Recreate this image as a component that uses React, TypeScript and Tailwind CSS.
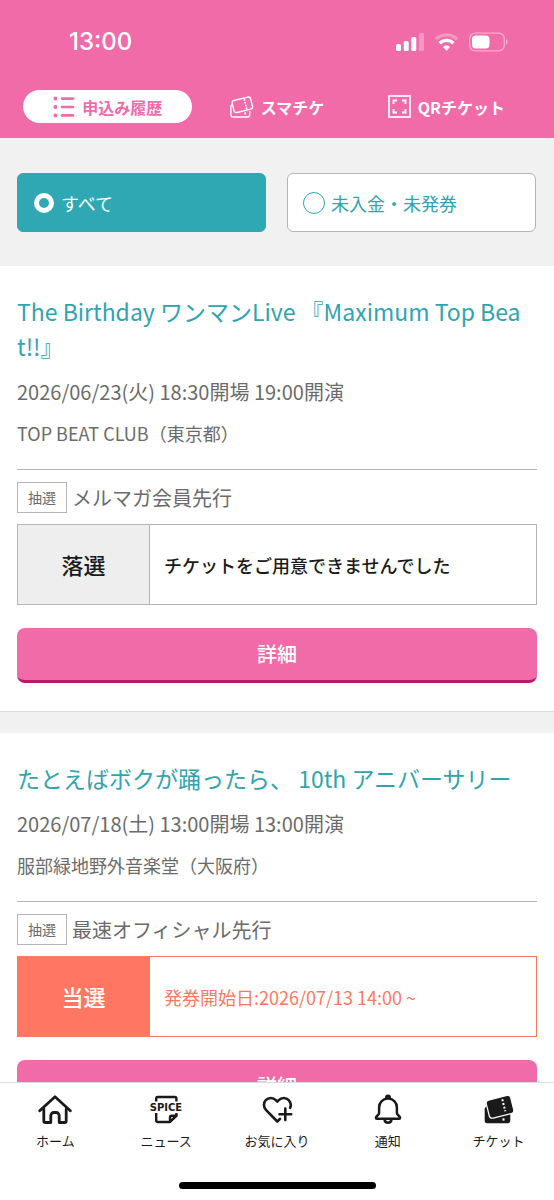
import React, { useState } from 'react';

interface Application {
  id: string;
  title: string;
  date: string;
  venue: string;
  saleType: string;
  saleName: string;
  status: 'won' | 'lost';
  statusLabel: string;
  message: string;
}

const applications: Application[] = [
  {
    id: 'birthday',
    title: 'The Birthday ワンマンLive 『Maximum Top Beat!!』',
    date: '2026/06/23(火) 18:30開場 19:00開演',
    venue: 'TOP BEAT CLUB（東京都）',
    saleType: '抽選',
    saleName: 'メルマガ会員先行',
    status: 'lost',
    statusLabel: '落選',
    message: 'チケットをご用意できませんでした',
  },
  {
    id: 'tatoeba',
    title: 'たとえばボクが踊ったら、 10th アニバーサリー',
    date: '2026/07/18(土) 13:00開場 13:00開演',
    venue: '服部緑地野外音楽堂（大阪府）',
    saleType: '抽選',
    saleName: '最速オフィシャル先行',
    status: 'won',
    statusLabel: '当選',
    message: '発券開始日:2026/07/13 14:00 ~',
  },
];

const StatusBar = () => (
  <div className="flex h-[82px] items-center justify-between pt-0.5 pr-[46px] pl-[69px] text-white">
    <span className="font-['Inter',sans-serif] text-2xl font-medium">13:00</span>
    <div className="flex items-center gap-[11px]">
      <svg width="28" height="18" viewBox="0 0 28 18" fill="currentColor">
        <rect x="0" y="11" width="5" height="7" rx="1.5" />
        <rect x="7.7" y="8" width="5" height="10" rx="1.5" />
        <rect x="15.3" y="4" width="5" height="14" rx="1.5" />
        <rect x="23" y="0" width="5" height="18" rx="1.5" opacity="0.3" />
      </svg>
      <svg width="23" height="18" viewBox="0 0 23 18" fill="none" stroke="currentColor" strokeWidth="3.4">
        <path d="M1 6.2a15 15 0 0 1 21 0" opacity="0.3" />
        <path d="M4.6 10.2a9.8 9.8 0 0 1 13.8 0" />
        <path d="M8 14a5 5 0 0 1 7 0L11.5 17.800z" fill="currentColor" stroke="none" />
      </svg>
      <svg width="39" height="20" viewBox="0 0 39 20">
        <rect x="0.7" y="1.2" width="34.6" height="17.6" rx="5.5" fill="none" stroke="currentColor" strokeWidth="1.3" opacity="0.45" />
        <rect x="3" y="3.5" width="17.5" height="13" rx="3.8" fill="currentColor" />
        <path d="M37 7.3c2 .9 2 4.5 0 5.4z" fill="currentColor" opacity="0.5" />
      </svg>
    </div>
  </div>
);

const ListIcon = () => (
  <svg width="22" height="22" viewBox="0 0 22 22" fill="none" stroke="currentColor" strokeWidth="2.6" strokeLinecap="round">
    <path d="M9 2.6h11M9 11h11M9 19.4h11" />
    <path d="M2.4 2.6h.01M2.4 11h.01M2.4 19.4h.01" strokeWidth="4" />
  </svg>
);

const TicketsIcon = () => (
  <svg width="24" height="22" viewBox="0 0 24 22" fill="none" stroke="currentColor" strokeWidth="1.4" strokeLinecap="round" strokeLinejoin="round">
    <rect x="2.8" y="2.6" width="19" height="12.4" rx="2.4" transform="rotate(-14 12.3 8.8)" />
    <path d="M1.9 8.8c-.7.5-1 1-1 1.8v8.2a2.2 2.2 0 0 0 2.2 2.2h14.4a2.2 2.2 0 0 0 2.2-2.2v-3.2" />
    <path d="M14.4 3.8l2.3 8.8" strokeWidth="1.9" strokeDasharray="0.1 2.8" />
    <path d="M15.2 17v.8" strokeWidth="1.8" />
  </svg>
);

const QrIcon = () => (
  <svg width="23" height="23" viewBox="0 0 23 23" fill="none" stroke="currentColor" strokeWidth="1.7">
    <rect x="1" y="1" width="21" height="21" />
    <path d="M5.5 9V5.5H9M14 5.5h3.5V9M17.5 14v3.5H14M9 17.5H5.5V14" strokeWidth="1.9" />
  </svg>
);

const HomeIcon = () => (
  <svg width="34" height="32" viewBox="0 0 34 32" fill="none" stroke="currentColor" strokeWidth="2.8" strokeLinecap="round" strokeLinejoin="round">
    <path d="M1.7 16.8 17 2.8l15.3 14" />
    <path d="M5.8 15v12a1.500 1.500 0 0 0 1.500 1.500h5.500v-7a3 3 0 0 1 3-3h2.400a3 3 0 0 1 3 3v7h5.500a1.500 1.500 0 0 0 1.500-1.500V15" />
  </svg>
);

const NewsIcon = () => (
  <svg width="36" height="32" viewBox="0 0 36 32" fill="none" stroke="currentColor" strokeWidth="2.4" strokeLinejoin="round">
    <path d="M8.2 7.5V4.500a1.500 1.500 0 0 1 1.500-1.500h17.200a1.500 1.500 0 0 1 1.500 1.500v3" />
    <path d="M8.2 19v7.500A1.500 1.500 0 0 0 9.700 28h12l6.700-6.500V19" />
    <path d="M22 28v-4.700a1.500 1.500 0 0 1 1.500-1.500h4.900z" />
    <text x="18" y="17" textAnchor="middle" fill="currentColor" stroke="none" className="font-['DejaVu_Sans',sans-serif] text-[10px] font-bold">
      SPICE
    </text>
  </svg>
);

const FavoriteIcon = () => (
  <svg width="32" height="32" viewBox="0 0 32 32" fill="none" stroke="currentColor" strokeWidth="2.6" strokeLinecap="round" strokeLinejoin="round">
    <path d="M19 24.800 16.300 27.500 4.900 15.800C2.300 13.200 2.300 8.900 4.800 6.200c2.800-2.900 7.300-2.800 10 0l1.500 1.500 1.500-1.500c2.700-2.800 7.200-2.900 9.900 0 2 2.200 2.600 5 1.500 7.600" />
    <path d="M24.300 14.500v11.500M18.500 20.300h11.700" />
  </svg>
);

const BellIcon = () => (
  <svg width="28" height="32" viewBox="0 0 28 32" fill="none" stroke="currentColor" strokeWidth="2.5" strokeLinecap="round" strokeLinejoin="round">
    <path d="M14 4.600c-5 0-8.900 3.900-8.900 8.900v5.600c0 2.200-3.200 2.700-3.200 4.800 0 .600.400.900 1 .900h22.200c.600 0 1-.300 1-.900 0-2.100-3.200-2.600-3.200-4.800v-5.600c0-5-3.900-8.900-8.900-8.900z" />
    <path d="M12.200 3.300c.2-2 3.400-2 3.600 0z" fill="currentColor" />
    <path d="M10.500 25.500c.5 4.300 6.500 4.300 7 0" />
  </svg>
);

const TicketSolidIcon = () => (
  <svg width="32" height="32" viewBox="0 0 32 32" fill="currentColor">
    <path d="M3.500 12.300 1.700 14.300v12.500a2.500 2.500 0 0 0 2.500 2.500h20.600a2.500 2.500 0 0 0 2.500-2.500V18z" />
    <rect x="4.4" y="3.500" width="25.200" height="18.600" rx="3.200" transform="rotate(-14 17 12.800)" stroke="white" strokeWidth="1.200" />
    <path d="M19.300 5.300l3 12" fill="none" stroke="white" strokeWidth="2" strokeDasharray="2 1.800" />
    <path d="M20.500 24.300v2.300" fill="none" stroke="white" strokeWidth="2" />
  </svg>
);

const tabs = [
  { id: 'history', label: '申込み履歴', icon: <ListIcon /> },
  { id: 'smart', label: 'スマチケ', icon: <TicketsIcon /> },
  { id: 'qr', label: 'QRチケット', icon: <QrIcon /> },
];

const filters = [
  { id: 'all', label: 'すべて' },
  { id: 'pending', label: '未入金・未発券' },
];

const navItems = [
  { label: 'ホーム', icon: <HomeIcon /> },
  { label: 'ニュース', icon: <NewsIcon /> },
  { label: 'お気に入り', icon: <FavoriteIcon /> },
  { label: '通知', icon: <BellIcon /> },
  { label: 'チケット', icon: <TicketSolidIcon /> },
];

const ApplicationCard: React.FC<{ item: Application }> = ({ item }) => {
  const won = item.status === 'won';

  return (
    <article className="border-b border-[#dcdcdc] bg-white px-[17px] py-7">
      <h2 className="text-[23px] leading-[35px] font-normal break-all text-[#2fa4b0]">{item.title}</h2>
      <p className="mt-[13px] text-xl leading-[30px] text-[#6b6b6b]">{item.date}</p>
      <p className="mt-[13px] text-lg leading-[26px] text-[#6b6b6b]">{item.venue}</p>

      <div className="mt-[23px] flex items-center gap-[5px] border-t border-[#b5b5b5] pt-3">
        <span className="border border-[#b5b5b5] px-2.5 text-sm leading-[29px] text-[#6b6b6b]">{item.saleType}</span>
        <span className="text-xl leading-[30px] text-[#6b6b6b]">{item.saleName}</span>
      </div>

      <div className={`mt-[11px] flex h-[81px] border ${won ? 'border-[#ff7762]' : 'border-[#b5b5b5]'}`}>
        <div
          className={`flex w-[132px] shrink-0 items-center justify-center border-r text-[22px] font-medium ${
            won ? 'border-[#ff7762] bg-[#ff7762] text-white' : 'border-[#b5b5b5] bg-[#eeeeee] text-[#1a1a1a]'
          }`}
        >
          {item.statusLabel}
        </div>
        <p
          className={`flex flex-1 items-center px-[14px] text-lg ${
            won ? 'font-normal text-[#ff7762]' : 'font-medium text-[#1a1a1a]'
          }`}
        >
          {item.message}
        </p>
      </div>

      <button
        type="button"
        className="mt-[23px] h-[55px] w-full rounded-lg border-b-3 border-[#bf1768] bg-[#f16ba9] text-xl font-medium text-white"
      >
        詳細
      </button>
    </article>
  );
};

export default function App() {
  const [activeTab, setActiveTab] = useState('history');
  const [filter, setFilter] = useState('all');

  return (
    <div className="flex h-dvh flex-col bg-[#f1f1f1] font-['Noto_Sans_CJK_JP',sans-serif]">
      <header className="shrink-0 bg-[#f16ba9] pb-[15px]">
        <StatusBar />
        <nav className="flex px-[23px] pt-2">
          {tabs.map((tab) => (
            <button
              key={tab.id}
              type="button"
              onClick={() => setActiveTab(tab.id)}
              className={`flex h-[33px] flex-1 items-center justify-center gap-[7px] rounded-full text-base leading-6 font-bold ${
                activeTab === tab.id ? 'bg-white text-[#f16ba9]' : 'text-white'
              }`}
            >
              {tab.icon}
              {tab.label}
            </button>
          ))}
        </nav>
      </header>

      <main className="min-h-0 flex-1 overflow-y-auto [scrollbar-width:none]">
        <div className="grid grid-cols-2 gap-[21px] pt-[35px] pr-[18px] pb-[34px] pl-[17px]">
          {filters.map((f) => {
            const selected = filter === f.id;
            return (
              <label
                key={f.id}
                className={`flex h-[59px] items-center gap-1.5 rounded-md border px-[15px] text-lg ${
                  selected ? 'border-[#2fa8b3] bg-[#2fa8b3] text-white' : 'border-[#b5b5b5] bg-white text-[#2fa4b0]'
                }`}
              >
                <input
                  type="radio"
                  name="filter"
                  value={f.id}
                  checked={selected}
                  onChange={() => setFilter(f.id)}
                  className="size-[22px] appearance-none rounded-full border border-[#2fa4b0] checked:m-px checked:size-5 checked:border-5 checked:border-white"
                />
                {f.label}
              </label>
            );
          })}
        </div>

        <div className="flex flex-col gap-[21px]">
          {applications.map((item) => (
            <ApplicationCard key={item.id} item={item} />
          ))}
        </div>
      </main>

      <footer className="flex shrink-0 flex-col items-center border-t border-[#dcdcdc] bg-white pb-[11px] text-[#1a1a1a]">
        <nav className="grid w-full grid-cols-5 pt-[11px]">
          {navItems.map((item) => (
            <a key={item.label} href="#" className="flex flex-col items-center gap-[3px] text-[13px] leading-6">
              {item.icon}
              {item.label}
            </a>
          ))}
        </nav>
        {/* home indicator */}
        <div className="mt-[29px] h-[7px] w-[197px] rounded-full bg-black" />
      </footer>
    </div>
  );
}
